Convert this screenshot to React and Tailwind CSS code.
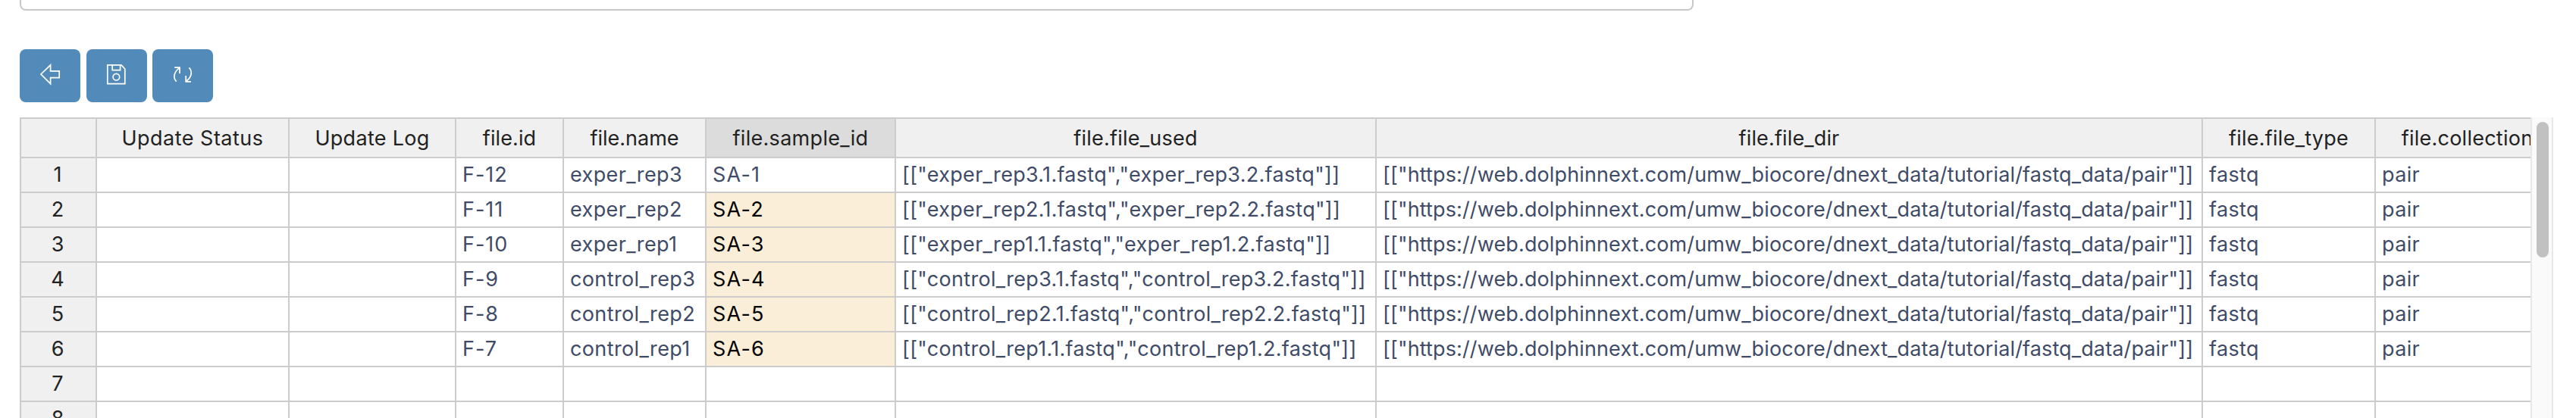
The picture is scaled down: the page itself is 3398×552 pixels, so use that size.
import React from "react";

const DIR = '[["https://web.dolphinnext.com/umw_biocore/dnext_data/tutorial/fastq_data/pair"]]';

const files = [
  { id: "F-12", name: "exper_rep3", sample: "SA-1" },
  { id: "F-11", name: "exper_rep2", sample: "SA-2" },
  { id: "F-10", name: "exper_rep1", sample: "SA-3" },
  { id: "F-9", name: "control_rep3", sample: "SA-4" },
  { id: "F-8", name: "control_rep2", sample: "SA-5" },
  { id: "F-7", name: "control_rep1", sample: "SA-6" },
  null,
  null,
];

const columns = [
  { title: "Update Status", width: "w-[254px]", head: "tracking-[0.48px]", body: "", value: () => "" },
  { title: "Update Log", width: "w-[220px]", head: "tracking-[0.3px]", body: "", value: () => "" },
  { title: "file.id", width: "w-[142px]", head: "tracking-[0.1px]", body: "tracking-[1px]", value: (f) => f.id },
  { title: "file.name", width: "w-[188px]", head: "", body: "tracking-[0.38px]", value: (f) => f.name },
  { title: "file.sample_id", width: "w-[250px]", head: "bg-[#dcdcdc] tracking-[0.29px]", body: "tracking-[1.2px]", value: (f) => f.sample, marks: true },
  { title: "file.file_used", width: "w-[634px]", head: "tracking-[0.25px]", body: "tracking-[0.3px]", value: (f) => `[["${f.name}.1.fastq","${f.name}.2.fastq"]]` },
  { title: "file.file_dir", width: "w-[1090px]", head: "tracking-[0.14px]", body: "tracking-[0.13px]", value: () => DIR },
  { title: "file.file_type", width: "w-[228px]", head: "tracking-[0.25px]", body: "tracking-[0.35px]", value: () => "fastq" },
  { title: "file.collection", width: "w-[243px]", head: "tracking-[0.25px]", body: "tracking-[0.35px]", value: () => "pair" },
];

function ToolButton({ label, className = "", children }) {
  return (
    <button
      type="button"
      aria-label={label}
      className={`h-[70px] w-20 rounded-lg bg-[#528bb9] text-white ${className}`}
    >
      <svg width="80" height="70" viewBox="0 0 80 70" fill="none" stroke="currentColor" strokeWidth="1.7">
        {children}
      </svg>
    </button>
  );
}

function HeaderRow() {
  return (
    <div className="flex h-[52px] border-b-2 border-[#cccccc] bg-[#f0f0f0] text-[#222222]">
      <div className="w-[100px] shrink-0 border-r-2 border-[#cccccc]" />
      {columns.map((c) => (
        <div
          key={c.title}
          className={`shrink-0 border-r-2 border-[#cccccc] text-center leading-[52px] ${c.width} ${c.head}`}
        >
          {c.title}
        </div>
      ))}
    </div>
  );
}

function Row({ number, file }) {
  return (
    <div className="flex h-[46px] border-b-2 border-[#cccccc] leading-[44px] text-[#3f4b67]">
      <div className="w-[100px] shrink-0 border-r-2 border-[#cccccc] bg-[#f0f0f0] pr-0.5 text-center text-[#222222]">
        {number}
      </div>
      {columns.map((c) => (
        <div
          key={c.title}
          className={`shrink-0 border-r-2 border-[#cccccc] pl-2 ${c.width} ${c.body} ${
            c.marks && file && number > 1 ? "bg-[#faeed8] text-black" : ""
          }`}
        >
          {file ? c.value(file) : ""}
        </div>
      ))}
    </div>
  );
}

export default function App() {
  return (
    <div className="h-[552px] w-[3398px] overflow-hidden bg-white pl-[26px] font-[Inter,sans-serif] text-[27px]">
      <div className="h-3.5 w-[2208px] rounded-b-lg border-x-2 border-b-2 border-[#c8c8c8]" />

      <div className="mt-[51px] flex">
        <ToolButton label="Back">
          <path d="M28 33 L40.6 20.8 V28.8 H52.2 V37.6 H40.6 V45.6 Z" />
        </ToolButton>
        <ToolButton label="Save" className="ml-2">
          <path d="M27.8 20.8 H46 L50.8 26 V45.6 H27.8 Z" />
          <path d="M34.2 20.8 V27.6 H44.6 V20.8" />
          <circle cx="39.4" cy="36.7" r="4.3" />
        </ToolButton>
        <ToolButton label="Reload" className="ml-[7px]">
          <path d="M29.2 24.2 H36 V32" />
          <path d="M36 24.6 C28.5 29.5 26.8 37.5 31.6 42.6" />
          <path d="M51 42.8 H44.2 V35" />
          <path d="M44.2 42.4 C51.7 37.5 53.4 29.5 48.4 24.4" />
        </ToolButton>
      </div>

      <div className="mt-5 flex h-[397px]">
        <div className="w-[3312px] overflow-hidden whitespace-nowrap border-l-2 border-t-2 border-[#cccccc]">
          <HeaderRow />
          {files.map((file, i) => (
            <Row key={i} number={i + 1} file={file} />
          ))}
        </div>
        <div className="w-[30px] border-x-2 border-[#e8e8e8] bg-[#fafafa] pl-1.5 pt-1.5">
          <div className="h-[179px] w-4 rounded-full bg-[#c1c1c1]" />
        </div>
      </div>
    </div>
  );
}
